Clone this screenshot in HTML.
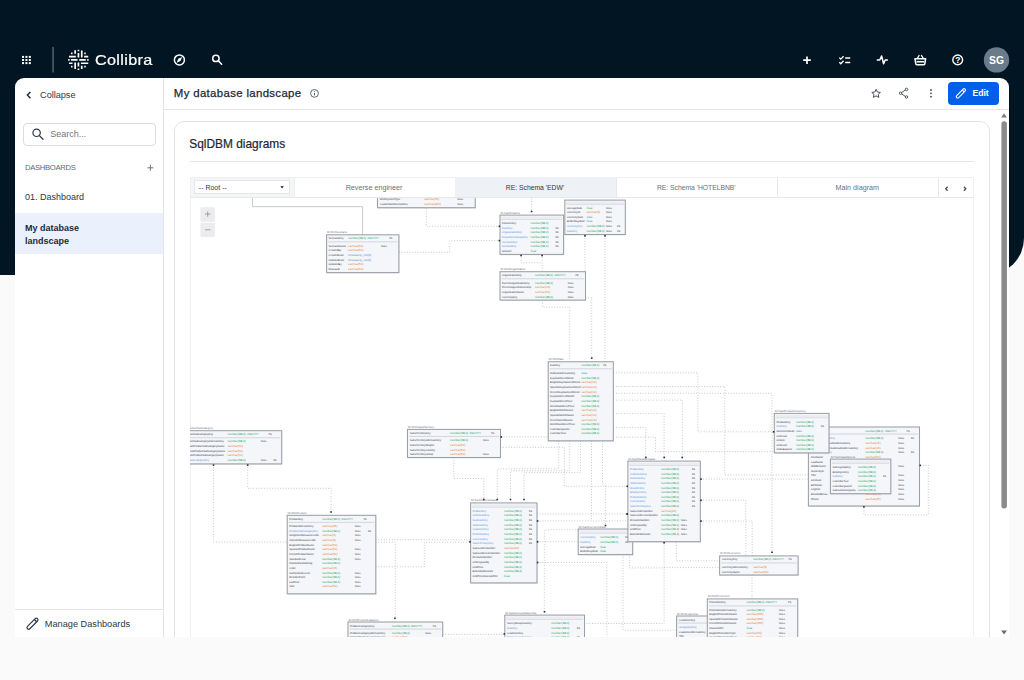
<!DOCTYPE html>
<html lang="en">
<head>
<meta charset="utf-8">
<title>My database landscape</title>
<style>
*{box-sizing:border-box;margin:0;padding:0}
html,body{width:1024px;height:680px;overflow:hidden;background:#fafafa;font-family:"Liberation Sans",sans-serif;color:#1f2a37}
.abs{position:absolute}
#dark{position:absolute;left:0;top:0;width:1024px;height:275px;background:#011622;border-bottom-right-radius:37px}
#panel{position:absolute;left:15px;top:77.5px;width:994px;height:559.5px;background:#fff;border-radius:9px 9px 0 0;overflow:hidden}
svg{display:block}
.t{position:absolute;white-space:nowrap;line-height:1}
.tab{top:183.5px;font-size:7.2px;text-align:center}
</style>
</head>
<body>
<div id="dark"></div>

<!-- top navigation -->
<svg class="abs" style="left:0;top:40px" width="1024" height="40" viewBox="0 40 1024 40">
  <!-- app grid -->
  <g fill="#fff">
    <rect x="22" y="55.9" width="2.05" height="2"/><rect x="25.4" y="55.9" width="2.05" height="2"/><rect x="28.8" y="55.9" width="2.05" height="2"/>
    <rect x="22" y="59.0" width="2.05" height="2"/><rect x="25.4" y="59.0" width="2.05" height="2"/><rect x="28.8" y="59.0" width="2.05" height="2"/>
    <rect x="22" y="62.1" width="2.05" height="2"/><rect x="25.4" y="62.1" width="2.05" height="2"/><rect x="28.8" y="62.1" width="2.05" height="2"/>
  </g>
  <rect x="52.4" y="47" width="1.3" height="25.5" fill="#5d6c7b"/>
  <!-- collibra mark -->
  <g transform="translate(78.35 59.95)" stroke="#fff" stroke-width="1.7" fill="none">
    <path d="M-9.4 -3.3H-2.5M5.8 -3.3H9.9M-7.3 0H-.8M.9 0H7.4M-9.4 3.3H-5.8M2.6 3.3H9.9"/>
    <path d="M-3.2 -9.8V-6.3M-3.2 2.5V9M.1 -7V-2.5M.1 2.5V6.5M3.4 -9.4V-2.5M3.4 5.8V9"/>
    <path d="M-10.2 0H-8.7M8.8 0H10.3M.1 -10.1V-8.6M.1 8.5V10M-7.3 -6.6H-5.8M5.9 -6.6H7.4M-7.3 6.6H-5.8M5.9 6.6H7.4"/>
  </g>
  <!-- compass -->
  <circle cx="179.4" cy="59.9" r="5" fill="none" stroke="#fff" stroke-width="1.5"/>
  <path d="M182.2 57.1L180.5 61L176.6 62.7L178.3 58.8Z" fill="#fff"/>
  <!-- search -->
  <circle cx="215.9" cy="58.4" r="3.2" fill="none" stroke="#fff" stroke-width="1.5"/>
  <path d="M218.3 60.8L221.6 64.2" stroke="#fff" stroke-width="1.6" stroke-linecap="round"/>
  <!-- plus -->
  <path d="M807 56.4V64M803.2 60.2H810.8" stroke="#fff" stroke-width="1.7"/>
  <!-- checklist -->
  <path d="M839.3 57.6L840.8 59.1L843.6 56.2M839.3 62.2L840.8 63.7L843.6 60.8" stroke="#fff" stroke-width="1.3" fill="none"/>
  <path d="M845.2 58H850.2M845.2 62.6H850.2" stroke="#fff" stroke-width="1.5"/>
  <!-- activity -->
  <path d="M877.3 60H879.8L881.6 56L883.6 63.8L885.2 60H887.4" stroke="#fff" stroke-width="1.5" fill="none" stroke-linejoin="round" stroke-linecap="round"/>
  <!-- basket -->
  <path d="M915 58.7H925.6L924.8 64Q924.7 64.7 924 64.7H916.6Q915.9 64.7 915.8 64Z" fill="none" stroke="#fff" stroke-width="1.55" stroke-linejoin="round"/>
  <path d="M917.2 58.5L919.1 55.5M923.4 58.5L921.5 55.5" stroke="#fff" stroke-width="1.4" stroke-linecap="round"/>
  <path d="M916.6 61.75H924" stroke="#fff" stroke-width="1.6"/>
  <!-- help -->
  <circle cx="957.7" cy="59.9" r="4.9" fill="none" stroke="#fff" stroke-width="1.4"/>
  <text x="957.7" y="62.9" font-family="Liberation Sans, sans-serif" font-size="8.4" font-weight="700" fill="#fff" text-anchor="middle">?</text>
  <!-- avatar -->
  <circle cx="996.5" cy="59.9" r="12.7" fill="#6a7b8b"/>
  <text x="996.5" y="63.6" font-family="Liberation Sans, sans-serif" font-size="10.3" font-weight="700" fill="#fff" text-anchor="middle">SG</text>
</svg>
<div class="t" style="left:95.2px;top:51.8px;font-size:15px;color:#fff;letter-spacing:.3px;-webkit-text-stroke:.2px #fff;transform:scaleX(1.08);transform-origin:0 0">Collibra</div>

<div id="panel">
  <!-- coordinates inside panel are page coords minus (15,77.5) -->
  <div class="abs" id="side" style="left:0;top:0;width:148.5px;height:559.5px;border-right:1px solid #e2e4e7"></div>
  <div class="abs" style="left:148.5px;top:31.5px;width:846px;height:1.2px;background:#e4e6e9"></div>
  <div class="abs" style="left:0;top:135.5px;width:148px;height:41px;background:#eaf1fc"></div>
  <div class="abs" style="left:0;top:531.5px;width:148px;height:1px;background:#e2e4e7"></div>
  <div class="abs" style="left:7.5px;top:45.5px;width:133px;height:22.5px;border:1px solid #d9dce0;border-radius:4px"></div>
  <!-- card -->
  <div class="abs" style="left:158.5px;top:43px;width:816.5px;height:560px;border:1px solid #e1e3e6;border-radius:10px"></div>
  <div class="abs" style="left:174.5px;top:83.5px;width:784px;height:1.2px;background:#e4e6e9"></div>
  <!-- edit button -->
  <div class="abs" style="left:932.5px;top:4.5px;width:51.5px;height:22.5px;background:#035eea;border-radius:4px"></div>
</div>

<!-- text & icons (page coordinates) -->
<div class="t" style="left:40.1px;top:91.3px;font-size:9.2px;color:#2c3745;letter-spacing:-.05px">Collapse</div>
<div class="t" style="left:50.2px;top:130.2px;font-size:9px;color:#6a7683">Search...</div>
<div class="t" style="left:25px;top:163.6px;font-size:7.7px;color:#5b6a7a;letter-spacing:-.33px">DASHBOARDS</div>
<div class="t" style="left:25px;top:192.6px;font-size:9px;color:#2c3745">01. Dashboard</div>
<div class="t" style="left:25px;top:221.7px;font-size:9px;font-weight:700;color:#1f2a37;line-height:13.2px">My database<br>landscape</div>
<div class="t" style="left:44.8px;top:620.4px;font-size:9.2px;color:#2c3745">Manage Dashboards</div>
<div class="t" style="left:173.8px;top:88.1px;font-size:11.4px;color:#1c2632;letter-spacing:.35px;-webkit-text-stroke:.25px #1c2632">My database landscape</div>
<div class="t" style="left:189.3px;top:139px;font-size:11.9px;color:#1c2632;-webkit-text-stroke:.2px #1c2632">SqlDBM diagrams</div>
<div class="t" style="left:972.6px;top:89.4px;font-size:8.7px;font-weight:700;color:#fff;letter-spacing:-.1px">Edit</div>

<svg class="abs" style="left:0;top:77px" width="1024" height="560" viewBox="0 77 1024 560">
  <!-- collapse chevron -->
  <path d="M30.4 92L27.4 95.1L30.4 98.2" stroke="#1f2a37" stroke-width="1.4" fill="none"/>
  <!-- sidebar search icon -->
  <circle cx="36.6" cy="132.8" r="3.7" fill="none" stroke="#2c3745" stroke-width="1.2"/>
  <path d="M39.4 135.6L43 139.2" stroke="#2c3745" stroke-width="1.3" stroke-linecap="round"/>
  <!-- add dashboard plus -->
  <path d="M150.4 164.8V170.8M147.4 167.8H153.4" stroke="#5b6a7a" stroke-width="0.9"/>
  <!-- manage pencil -->
  <g transform="translate(32.5 623.7) rotate(-45)" fill="none" stroke="#2c3745" stroke-width="1.15"><rect x="-7.1" y="-1.65" width="14.2" height="3.3" rx="1.65"/><path d="M4.3 -1.6V1.6" stroke-width="1.3"/></g>
  <!-- info icon -->
  <circle cx="314.5" cy="93.4" r="3.9" fill="none" stroke="#4a5663" stroke-width="0.9"/>
  <path d="M314.5 92.9V95.4M314.5 91.2V91.9" stroke="#4a5663" stroke-width="0.9"/>
  <!-- star -->
  <path d="M876.1 89.3L877.4 92L880.4 92.4L878.2 94.4L878.8 97.4L876.1 95.9L873.4 97.4L874 94.4L871.8 92.4L874.8 92Z" fill="none" stroke="#3b4755" stroke-width=".95" stroke-linejoin="round"/>
  <!-- share -->
  <path d="M905.6 89.9L901.6 92.6M901.6 93.9L905.6 96.6" stroke="#3b4755" stroke-width=".9" fill="none"/>
  <circle cx="906.5" cy="89.4" r="1.25" fill="none" stroke="#3b4755" stroke-width=".9"/><circle cx="900.6" cy="93.2" r="1.25" fill="none" stroke="#3b4755" stroke-width=".9"/><circle cx="906.5" cy="97" r="1.25" fill="none" stroke="#3b4755" stroke-width=".9"/>
  <!-- kebab -->
  <circle cx="931" cy="90" r=".9" fill="#3b4755"/><circle cx="931" cy="93.35" r=".9" fill="#3b4755"/><circle cx="931" cy="96.7" r=".9" fill="#3b4755"/>
  <!-- edit pencil -->
  <g transform="translate(960.9 93.35) rotate(-45)" fill="none" stroke="#fff" stroke-width="1.1"><rect x="-5.9" y="-1.4" width="11.8" height="2.8" rx="1.4"/><path d="M3.4 -1.3V1.3" stroke-width="1.1"/></g>
  <!-- scrollbar -->
  <path d="M1001.2 117.5H1006.9L1004.05 113.2Z" fill="#7d7d7d"/>
  <path d="M1001.2 630.4H1006.9L1004.05 634.4Z" fill="#6b6b6b"/>
  <rect x="1001.4" y="121.2" width="5.5" height="387.2" rx="2.7" fill="#8a8a8a"/>
</svg>


<!-- diagram frame -->
<div class="abs" style="left:189.5px;top:177px;width:784.5px;height:460px;border:1px solid #eff0f2;border-bottom:none"></div>
<div class="abs" style="left:190.5px;top:178px;width:103px;height:19px;background:#f3f5f7"></div>
<div class="abs" style="left:454.5px;top:178px;width:161.5px;height:19px;background:#eef1f5"></div>
<div class="abs" style="left:190.5px;top:196.7px;width:782.5px;height:1px;background:#e6e8eb"></div>
<div class="abs" style="left:193.5px;top:180.3px;width:96.5px;height:14px;background:#fff;border:1px solid #e3e6ea"></div>
<div class="abs" style="left:293.5px;top:178px;width:1px;height:19px;background:#eceef0"></div>
<div class="abs" style="left:615.8px;top:178px;width:1px;height:19px;background:#e6e8eb"></div>
<div class="abs" style="left:776.5px;top:178px;width:1px;height:19px;background:#e6e8eb"></div>
<div class="abs" style="left:937.5px;top:178px;width:1px;height:19px;background:#e6e8eb"></div>
<div class="t" style="left:198.8px;top:184.1px;font-size:7px;color:#33383e">-- Root --</div>
<div class="t tab" style="left:293.5px;width:161px;color:#6b7077">Reverse engineer</div>
<div class="t tab" style="left:454.5px;width:161px;color:#33383e;font-size:6.8px;top:184.6px">RE: Schema 'EDW'</div>
<div class="t tab" style="left:616px;width:160.5px;color:#6b7077;font-size:6.75px;top:184.6px">RE: Schema 'HOTELBNB'</div>
<div class="t tab" style="left:777px;width:160.5px;color:#6b7077">Main diagram</div>
<svg class="abs" style="left:190px;top:178px" width="784" height="62" viewBox="190 178 784 62">
  <path d="M280.4 186.3H283.8L282.1 188.4Z" fill="#222"/>
  <path d="M947.6 186.8L945.7 188.8L947.6 190.8" stroke="#4a4a4a" stroke-width="1.3" fill="none"/>
  <path d="M963.9 186.8L965.8 188.8L963.9 190.8" stroke="#4a4a4a" stroke-width="1.3" fill="none"/>
  <rect x="200.4" y="207.2" width="14.5" height="14.5" rx="1" fill="#ececef"/>
  <rect x="200.4" y="222.7" width="14.5" height="14.2" rx="1" fill="#ececef"/>
  <path d="M207.7 211.4V216.8M205 214.1H210.4M205 229.8H210.4" stroke="#8a8f96" stroke-width=".8"/>
</svg>
<svg class="abs" id="dgm" style="left:190px;top:197.5px" width="783.5" height="439.5" viewBox="190 197.5 783.5 439.5" font-family="Liberation Sans, sans-serif" text-rendering="geometricPrecision">
<defs><filter id="sh" x="-10%" y="-10%" width="120%" height="130%"><feGaussianBlur stdDeviation=".7"/></filter></defs>
<path d="M252.4 197V206.2H362.6V234.3" fill="none" stroke="#c6c8cc" stroke-width="1"/>
<g fill="none" stroke="#b3b7bb" stroke-width=".85" stroke-dasharray=".9 1.77">
<path d="M426.25 207.5V225.7H500"/>
<path d="M399 251.8H449.7V240.2H500"/>
<path d="M531.6 198V211"/>
<path d="M521.1 254V262.3H542.1"/>
<path d="M542.1 254V271"/>
<path d="M585 235V271"/>
<path d="M605 235V361"/>
<path d="M542.5 299.6V306.6H569.8V361"/>
<path d="M585.5 297.4H591.7V357.4"/>
<path d="M613.3 372.3H697.9V431.3H774"/>
<path d="M613.3 386H724.8V474.5H808"/>
<path d="M613.3 392.8H772V551.6"/>
<path d="M613.3 399.6H682.3V456.7"/>
<path d="M613.3 413.1H664.1V456.7"/>
<path d="M613.3 426.8H645.8V456.7"/>
<path d="M613.3 436.6H655.5V451.2H774"/>
<path d="M501 436.4H548.2"/>
<path d="M500.5 446.8H564.3V485.7H627.5"/>
<path d="M558.8 440.3V468.4H497.3V498.5"/>
<path d="M569.8 440.3V470.3H510.5V498.5"/>
<path d="M580.5 440.3V472.2H524V498.5"/>
<path d="M591.5 440.3V520.4"/>
<path d="M602.5 440.3V483.5H605.5V524.8"/>
<path d="M453.8 457V478H483.8V498.6"/>
<path d="M247.7 464V487.8H331.1V511.2"/>
<path d="M213.5 464V541.6H287"/>
<path d="M375.8 539.2H470.4"/>
<path d="M375.8 541.7H395.3V617.6"/>
<path d="M375.8 566.3H424.3V541.7H470.4"/>
<path d="M537 513.5H627.5"/>
<path d="M537 520.4H627.5"/>
<path d="M537 541.3H578"/>
<path d="M544.3 611V529.3H578"/>
<path d="M537 562H606.9V640"/>
<path d="M623.1 554V629.7H676.6"/>
<path d="M629.6 554V567.4H664"/>
<path d="M664.1 542V623H584.5"/>
<path d="M676.3 542V560.3H719.6"/>
<path d="M664.1 567.1H719.6"/>
<path d="M700.5 478.5H808"/>
<path d="M700.5 499.7H745.8V555"/>
<path d="M700.5 520.5H752.2V555"/>
<path d="M752 574.6V598"/>
<path d="M920 464.9H928.3V514.3H863.9V506"/>
<path d="M442.7 633.9H504.5"/>
</g>
<rect x="378.00" y="150.90" width="97.70" height="57.20" fill="#b4b9bf" opacity=".42" filter="url(#sh)"/>
<rect x="377.50" y="150.00" width="97.70" height="57.20" fill="#f4f6fa" stroke="#9b9fa6" stroke-width="1.05"/>
<text transform="scale(.1)" x="3798" y="1998" font-size="26.5" fill="#2f3338">MinPaymentType</text>
<text transform="scale(.1)" x="4239" y="1998" font-size="30.0" fill="#e8832f">varchar(50)</text>
<text transform="scale(.1)" x="4572" y="1998" font-size="24.0" fill="#34383d">NULL</text>
<text transform="scale(.1)" x="3798" y="2044" font-size="26.5" fill="#2f3338">CustomNumberOptions</text>
<text transform="scale(.1)" x="4239" y="2044" font-size="30.0" fill="#e8832f">varchar(200)</text>
<text transform="scale(.1)" x="4572" y="2044" font-size="24.0" fill="#34383d">NULL</text>
<rect x="327.10" y="235.20" width="72.30" height="37.80" fill="#b4b9bf" opacity=".42" filter="url(#sh)"/>
<rect x="326.60" y="234.30" width="72.30" height="37.80" fill="#f4f6fa" stroke="#9b9fa6" stroke-width="1.05"/>
<text transform="scale(.1)" x="3270" y="2328" font-size="28.5" fill="#70757b">tbl  DimScenario</text>
<text transform="scale(.1)" x="3286" y="2388" font-size="26.5" fill="#2f3338">ScenarioKey</text>
<text transform="scale(.1)" x="3481" y="2388" font-size="30.0" fill="#1fa65a">number(38,0)</text>
<text transform="scale(.1)" x="3673" y="2388" font-size="25.5" fill="#1fa65a">IDENTITY</text>
<text transform="scale(.1)" x="3892" y="2388" font-size="25.0" fill="#1d2024">PK</text>
<line x1="328.20" y1="241.35" x2="397.30" y2="241.35" stroke="#c3c8ce" stroke-width=".7"/>
<text transform="scale(.1)" x="3286" y="2462" font-size="26.5" fill="#2f3338">ScenarioName</text>
<text transform="scale(.1)" x="3481" y="2462" font-size="30.0" fill="#e8832f">varchar(50)</text>
<text transform="scale(.1)" x="3809" y="2462" font-size="24.0" fill="#34383d">NULL</text>
<text transform="scale(.1)" x="3286" y="2508" font-size="26.5" fill="#2f3338">CreatedBy</text>
<text transform="scale(.1)" x="3481" y="2508" font-size="30.0" fill="#e8832f">varchar(50)</text>
<text transform="scale(.1)" x="3286" y="2555" font-size="26.5" fill="#2f3338">CreatedDate</text>
<text transform="scale(.1)" x="3481" y="2555" font-size="30.0" fill="#4a8fe2">timestamp_ntz(9)</text>
<text transform="scale(.1)" x="3286" y="2601" font-size="26.5" fill="#2f3338">UpdatedDate</text>
<text transform="scale(.1)" x="3481" y="2601" font-size="30.0" fill="#4a8fe2">timestamp_ntz(9)</text>
<text transform="scale(.1)" x="3286" y="2648" font-size="26.5" fill="#2f3338">UpdatedBy</text>
<text transform="scale(.1)" x="3481" y="2648" font-size="30.0" fill="#e8832f">varchar(50)</text>
<text transform="scale(.1)" x="3286" y="2694" font-size="26.5" fill="#2f3338">RowGuid</text>
<text transform="scale(.1)" x="3481" y="2694" font-size="30.0" fill="#e8832f">varchar(50)</text>
<rect x="500.50" y="215.50" width="63.60" height="39.30" fill="#b4b9bf" opacity=".42" filter="url(#sh)"/>
<rect x="500.00" y="214.60" width="63.60" height="39.30" fill="#f4f6fa" stroke="#9b9fa6" stroke-width="1.05"/>
<text transform="scale(.1)" x="5004" y="2132" font-size="28.5" fill="#70757b">tbl  FactFinance</text>
<rect x="501.20" y="216.20" width="61.20" height="2.60" fill="#eaecf0"/>
<line x1="501.60" y1="219.00" x2="562.00" y2="219.00" stroke="#cfd3d8" stroke-width=".6"/>
<text transform="scale(.1)" x="5021" y="2236" font-size="26.5" fill="#2f3338">FinanceKey</text>
<text transform="scale(.1)" x="5305" y="2236" font-size="30.0" fill="#1fa65a">number(38,0)</text>
<text transform="scale(.1)" x="5021" y="2282" font-size="26.5" fill="#4a8fe2">DateKey</text>
<text transform="scale(.1)" x="5305" y="2282" font-size="30.0" fill="#1fa65a">number(38,0)</text>
<text transform="scale(.1)" x="5555" y="2282" font-size="25.0" fill="#1d2024">FK</text>
<text transform="scale(.1)" x="5021" y="2329" font-size="26.5" fill="#4a8fe2">OrganizationKey</text>
<text transform="scale(.1)" x="5305" y="2329" font-size="30.0" fill="#1fa65a">number(38,0)</text>
<text transform="scale(.1)" x="5555" y="2329" font-size="25.0" fill="#1d2024">FK</text>
<text transform="scale(.1)" x="5021" y="2375" font-size="26.5" fill="#4a8fe2">DepartmentGroupKey</text>
<text transform="scale(.1)" x="5305" y="2375" font-size="30.0" fill="#1fa65a">number(38,0)</text>
<text transform="scale(.1)" x="5555" y="2375" font-size="25.0" fill="#1d2024">FK</text>
<text transform="scale(.1)" x="5021" y="2422" font-size="26.5" fill="#4a8fe2">ScenarioKey</text>
<text transform="scale(.1)" x="5305" y="2422" font-size="30.0" fill="#1fa65a">number(38,0)</text>
<text transform="scale(.1)" x="5555" y="2422" font-size="25.0" fill="#1d2024">FK</text>
<text transform="scale(.1)" x="5021" y="2468" font-size="26.5" fill="#4a8fe2">AccountKey</text>
<text transform="scale(.1)" x="5305" y="2468" font-size="30.0" fill="#1fa65a">number(38,0)</text>
<text transform="scale(.1)" x="5555" y="2468" font-size="25.0" fill="#1d2024">FK</text>
<text transform="scale(.1)" x="5021" y="2514" font-size="26.5" fill="#2f3338">Amount</text>
<text transform="scale(.1)" x="5305" y="2514" font-size="30.0" fill="#1fa65a">float</text>
<rect x="565.30" y="200.50" width="60.50" height="34.40" fill="#b4b9bf" opacity=".42" filter="url(#sh)"/>
<rect x="564.80" y="199.60" width="60.50" height="34.40" fill="#f4f6fa" stroke="#9b9fa6" stroke-width="1.05"/>
<rect x="566.00" y="201.20" width="58.10" height="2.60" fill="#eaecf0"/>
<line x1="566.40" y1="204.00" x2="623.70" y2="204.00" stroke="#cfd3d8" stroke-width=".6"/>
<text transform="scale(.1)" x="5669" y="2080" font-size="26.5" fill="#2f3338">AverageRate</text>
<text transform="scale(.1)" x="5866" y="2080" font-size="30.0" fill="#1fa65a">float</text>
<text transform="scale(.1)" x="6060" y="2080" font-size="24.0" fill="#34383d">NULL</text>
<text transform="scale(.1)" x="5669" y="2126" font-size="26.5" fill="#2f3338">CurrencyID</text>
<text transform="scale(.1)" x="5866" y="2126" font-size="30.0" fill="#e8832f">varchar(3)</text>
<text transform="scale(.1)" x="6060" y="2126" font-size="24.0" fill="#34383d">NULL</text>
<text transform="scale(.1)" x="5669" y="2173" font-size="26.5" fill="#2f3338">CurrencyDate</text>
<text transform="scale(.1)" x="5866" y="2173" font-size="30.0" fill="#4a8fe2">date</text>
<text transform="scale(.1)" x="6060" y="2173" font-size="24.0" fill="#34383d">NULL</text>
<text transform="scale(.1)" x="5669" y="2219" font-size="26.5" fill="#2f3338">EndOfDayRate</text>
<text transform="scale(.1)" x="5866" y="2219" font-size="30.0" fill="#1fa65a">float</text>
<text transform="scale(.1)" x="6060" y="2219" font-size="24.0" fill="#34383d">NULL</text>
<text transform="scale(.1)" x="5669" y="2266" font-size="26.5" fill="#4a8fe2">CurrencyKey</text>
<text transform="scale(.1)" x="5866" y="2266" font-size="30.0" fill="#1fa65a">number(38,0)</text>
<text transform="scale(.1)" x="6060" y="2266" font-size="24.0" fill="#34383d">NULL</text>
<text transform="scale(.1)" x="6173" y="2266" font-size="25.0" fill="#1d2024">FK</text>
<text transform="scale(.1)" x="5669" y="2312" font-size="26.5" fill="#4a8fe2">DateKey</text>
<text transform="scale(.1)" x="5866" y="2312" font-size="30.0" fill="#1fa65a">number(38,0)</text>
<text transform="scale(.1)" x="6060" y="2312" font-size="24.0" fill="#34383d">NULL</text>
<text transform="scale(.1)" x="6173" y="2312" font-size="25.0" fill="#1d2024">FK</text>
<rect x="500.50" y="272.10" width="85.50" height="28.40" fill="#b4b9bf" opacity=".42" filter="url(#sh)"/>
<rect x="500.00" y="271.20" width="85.50" height="28.40" fill="#f4f6fa" stroke="#9b9fa6" stroke-width="1.05"/>
<text transform="scale(.1)" x="5004" y="2697" font-size="28.5" fill="#70757b">tbl  DimOrganization</text>
<text transform="scale(.1)" x="5021" y="2757" font-size="26.5" fill="#2f3338">OrganizationKey</text>
<text transform="scale(.1)" x="5350" y="2757" font-size="30.0" fill="#1fa65a">number(38,0)</text>
<text transform="scale(.1)" x="5542" y="2757" font-size="25.5" fill="#1fa65a">IDENTITY</text>
<text transform="scale(.1)" x="5754" y="2757" font-size="25.0" fill="#1d2024">PK</text>
<line x1="501.60" y1="278.25" x2="583.90" y2="278.25" stroke="#c3c8ce" stroke-width=".7"/>
<text transform="scale(.1)" x="5021" y="2832" font-size="26.5" fill="#2f3338">ParentOrganizationKey</text>
<text transform="scale(.1)" x="5350" y="2832" font-size="30.0" fill="#1fa65a">number(38,0)</text>
<text transform="scale(.1)" x="5677" y="2832" font-size="24.0" fill="#34383d">NULL</text>
<text transform="scale(.1)" x="5021" y="2878" font-size="26.5" fill="#2f3338">PercentageOfOwnership</text>
<text transform="scale(.1)" x="5350" y="2878" font-size="30.0" fill="#e8832f">varchar(16)</text>
<text transform="scale(.1)" x="5677" y="2878" font-size="24.0" fill="#34383d">NULL</text>
<text transform="scale(.1)" x="5021" y="2925" font-size="26.5" fill="#2f3338">OrganizationName</text>
<text transform="scale(.1)" x="5350" y="2925" font-size="30.0" fill="#e8832f">varchar(50)</text>
<text transform="scale(.1)" x="5677" y="2925" font-size="24.0" fill="#34383d">NULL</text>
<text transform="scale(.1)" x="5021" y="2971" font-size="26.5" fill="#2f3338">CurrencyKey</text>
<text transform="scale(.1)" x="5350" y="2971" font-size="30.0" fill="#1fa65a">number(38,0)</text>
<text transform="scale(.1)" x="5677" y="2971" font-size="24.0" fill="#34383d">NULL</text>
<rect x="184.50" y="431.10" width="97.70" height="33.20" fill="#b4b9bf" opacity=".42" filter="url(#sh)"/>
<rect x="184.00" y="430.20" width="97.70" height="33.20" fill="#f4f6fa" stroke="#9b9fa6" stroke-width="1.05"/>
<text transform="scale(.1)" x="1785" y="4287" font-size="28.5" fill="#70757b">tbl  DimProductSubcategory</text>
<text transform="scale(.1)" x="1846" y="4347" font-size="26.5" fill="#2f3338">ProductSubcategoryKey</text>
<text transform="scale(.1)" x="2276" y="4347" font-size="30.0" fill="#1fa65a">number(38,0)</text>
<text transform="scale(.1)" x="2471" y="4347" font-size="25.5" fill="#1fa65a">IDENTITY</text>
<text transform="scale(.1)" x="2686" y="4347" font-size="25.0" fill="#1d2024">PK</text>
<line x1="185.60" y1="437.25" x2="280.10" y2="437.25" stroke="#c3c8ce" stroke-width=".7"/>
<text transform="scale(.1)" x="1846" y="4418" font-size="26.5" fill="#2f3338">ProductSubcategoryAlternateKey</text>
<text transform="scale(.1)" x="2276" y="4418" font-size="30.0" fill="#1fa65a">number(38,0)</text>
<text transform="scale(.1)" x="2608" y="4418" font-size="24.0" fill="#34383d">NULL</text>
<text transform="scale(.1)" x="1846" y="4464" font-size="26.5" fill="#2f3338">EnglishProductSubcategoryName</text>
<text transform="scale(.1)" x="2276" y="4464" font-size="30.0" fill="#e8832f">varchar(50)</text>
<text transform="scale(.1)" x="1846" y="4511" font-size="26.5" fill="#2f3338">SpanishProductSubcategoryName</text>
<text transform="scale(.1)" x="2276" y="4511" font-size="30.0" fill="#e8832f">varchar(50)</text>
<text transform="scale(.1)" x="1846" y="4557" font-size="26.5" fill="#2f3338">FrenchProductSubcategoryName</text>
<text transform="scale(.1)" x="2276" y="4557" font-size="30.0" fill="#e8832f">varchar(50)</text>
<text transform="scale(.1)" x="1846" y="4604" font-size="26.5" fill="#4a8fe2">ProductCategoryKey</text>
<text transform="scale(.1)" x="2276" y="4604" font-size="30.0" fill="#1fa65a">number(38,0)</text>
<text transform="scale(.1)" x="2608" y="4604" font-size="24.0" fill="#34383d">NULL</text>
<text transform="scale(.1)" x="2735" y="4604" font-size="25.0" fill="#1d2024">FK</text>
<rect x="408.00" y="429.80" width="93.00" height="28.10" fill="#b4b9bf" opacity=".42" filter="url(#sh)"/>
<rect x="407.50" y="428.90" width="93.00" height="28.10" fill="#f4f6fa" stroke="#9b9fa6" stroke-width="1.05"/>
<text transform="scale(.1)" x="4079" y="4274" font-size="28.5" fill="#70757b">tbl  DimSalesTerritory</text>
<text transform="scale(.1)" x="4097" y="4334" font-size="26.5" fill="#2f3338">SalesTerritoryKey</text>
<text transform="scale(.1)" x="4501" y="4334" font-size="30.0" fill="#1fa65a">number(38,0)</text>
<text transform="scale(.1)" x="4693" y="4334" font-size="25.5" fill="#1fa65a">IDENTITY</text>
<text transform="scale(.1)" x="4912" y="4334" font-size="25.0" fill="#1d2024">PK</text>
<line x1="409.10" y1="435.95" x2="498.90" y2="435.95" stroke="#c3c8ce" stroke-width=".7"/>
<text transform="scale(.1)" x="4097" y="4408" font-size="26.5" fill="#2f3338">SalesTerritoryAlternateKey</text>
<text transform="scale(.1)" x="4501" y="4408" font-size="30.0" fill="#1fa65a">number(38,0)</text>
<text transform="scale(.1)" x="4830" y="4408" font-size="24.0" fill="#34383d">NULL</text>
<text transform="scale(.1)" x="4097" y="4454" font-size="26.5" fill="#2f3338">SalesTerritoryRegion</text>
<text transform="scale(.1)" x="4501" y="4454" font-size="30.0" fill="#e8832f">varchar(50)</text>
<text transform="scale(.1)" x="4097" y="4501" font-size="26.5" fill="#2f3338">SalesTerritoryCountry</text>
<text transform="scale(.1)" x="4501" y="4501" font-size="30.0" fill="#e8832f">varchar(50)</text>
<text transform="scale(.1)" x="4097" y="4547" font-size="26.5" fill="#2f3338">SalesTerritoryGroup</text>
<text transform="scale(.1)" x="4501" y="4547" font-size="30.0" fill="#e8832f">varchar(50)</text>
<text transform="scale(.1)" x="4830" y="4547" font-size="24.0" fill="#34383d">NULL</text>
<rect x="548.70" y="362.15" width="65.10" height="79.05" fill="#b4b9bf" opacity=".42" filter="url(#sh)"/>
<rect x="548.20" y="361.25" width="65.10" height="79.05" fill="#f4f6fa" stroke="#9b9fa6" stroke-width="1.05"/>
<text transform="scale(.1)" x="5486" y="3598" font-size="28.5" fill="#70757b">tbl  DimDate</text>
<text transform="scale(.1)" x="5500" y="3658" font-size="26.5" fill="#2f3338">DateKey</text>
<text transform="scale(.1)" x="5813" y="3658" font-size="30.0" fill="#1fa65a">number(38,0)</text>
<text transform="scale(.1)" x="6032" y="3658" font-size="25.0" fill="#1d2024">PK</text>
<line x1="549.80" y1="368.30" x2="611.70" y2="368.30" stroke="#c3c8ce" stroke-width=".7"/>
<text transform="scale(.1)" x="5500" y="3736" font-size="26.5" fill="#2f3338">FullDateAlternateKey</text>
<text transform="scale(.1)" x="5813" y="3736" font-size="30.0" fill="#4a8fe2">date</text>
<text transform="scale(.1)" x="5500" y="3782" font-size="26.5" fill="#2f3338">DayNumberOfWeek</text>
<text transform="scale(.1)" x="5813" y="3782" font-size="30.0" fill="#1fa65a">number(38,0)</text>
<text transform="scale(.1)" x="5500" y="3829" font-size="26.5" fill="#2f3338">EnglishDayNameOfWeek</text>
<text transform="scale(.1)" x="5813" y="3829" font-size="30.0" fill="#e8832f">varchar(10)</text>
<text transform="scale(.1)" x="5500" y="3875" font-size="26.5" fill="#2f3338">SpanishDayNameOfWeek</text>
<text transform="scale(.1)" x="5813" y="3875" font-size="30.0" fill="#e8832f">varchar(10)</text>
<text transform="scale(.1)" x="5500" y="3922" font-size="26.5" fill="#2f3338">FrenchDayNameOfWeek</text>
<text transform="scale(.1)" x="5813" y="3922" font-size="30.0" fill="#e8832f">varchar(10)</text>
<text transform="scale(.1)" x="5500" y="3968" font-size="26.5" fill="#2f3338">DayNumberOfMonth</text>
<text transform="scale(.1)" x="5813" y="3968" font-size="30.0" fill="#1fa65a">number(38,0)</text>
<text transform="scale(.1)" x="5500" y="4014" font-size="26.5" fill="#2f3338">DayNumberOfYear</text>
<text transform="scale(.1)" x="5813" y="4014" font-size="30.0" fill="#1fa65a">number(38,0)</text>
<text transform="scale(.1)" x="5500" y="4061" font-size="26.5" fill="#2f3338">WeekNumberOfYear</text>
<text transform="scale(.1)" x="5813" y="4061" font-size="30.0" fill="#1fa65a">number(38,0)</text>
<text transform="scale(.1)" x="5500" y="4107" font-size="26.5" fill="#2f3338">EnglishMonthName</text>
<text transform="scale(.1)" x="5813" y="4107" font-size="30.0" fill="#e8832f">varchar(10)</text>
<text transform="scale(.1)" x="5500" y="4154" font-size="26.5" fill="#2f3338">SpanishMonthName</text>
<text transform="scale(.1)" x="5813" y="4154" font-size="30.0" fill="#e8832f">varchar(10)</text>
<text transform="scale(.1)" x="5500" y="4200" font-size="26.5" fill="#2f3338">FrenchMonthName</text>
<text transform="scale(.1)" x="5813" y="4200" font-size="30.0" fill="#e8832f">varchar(10)</text>
<text transform="scale(.1)" x="5500" y="4246" font-size="26.5" fill="#2f3338">MonthNumberOfYear</text>
<text transform="scale(.1)" x="5813" y="4246" font-size="30.0" fill="#1fa65a">number(38,0)</text>
<text transform="scale(.1)" x="5500" y="4293" font-size="26.5" fill="#2f3338">CalendarQuarter</text>
<text transform="scale(.1)" x="5813" y="4293" font-size="30.0" fill="#1fa65a">number(38,0)</text>
<text transform="scale(.1)" x="5500" y="4339" font-size="26.5" fill="#2f3338">CalendarYear</text>
<text transform="scale(.1)" x="5813" y="4339" font-size="30.0" fill="#1fa65a">number(38,0)</text>
<text transform="scale(.1)" x="5500" y="4382" font-size="26.5" fill="#9a9fa6">...</text>
<rect x="808.90" y="427.40" width="111.10" height="79.00" fill="#b4b9bf" opacity=".42" filter="url(#sh)"/>
<rect x="808.40" y="426.50" width="111.10" height="79.00" fill="#f4f6fa" stroke="#9b9fa6" stroke-width="1.05"/>
<text transform="scale(.1)" x="8110" y="4310" font-size="26.5" fill="#2f3338">EmployeeKey</text>
<text transform="scale(.1)" x="8653" y="4310" font-size="30.0" fill="#1fa65a">number(38,0)</text>
<text transform="scale(.1)" x="8850" y="4310" font-size="25.5" fill="#1fa65a">IDENTITY</text>
<text transform="scale(.1)" x="9066" y="4310" font-size="25.0" fill="#1d2024">PK</text>
<line x1="810.00" y1="433.55" x2="917.90" y2="433.55" stroke="#c3c8ce" stroke-width=".7"/>
<text transform="scale(.1)" x="8110" y="4388" font-size="26.5" fill="#4a8fe2">ParentEmployeeKey</text>
<text transform="scale(.1)" x="8653" y="4388" font-size="30.0" fill="#1fa65a">number(38,0)</text>
<text transform="scale(.1)" x="8983" y="4388" font-size="24.0" fill="#34383d">NULL</text>
<text transform="scale(.1)" x="9110" y="4388" font-size="25.0" fill="#1d2024">FK</text>
<text transform="scale(.1)" x="8110" y="4434" font-size="26.5" fill="#2f3338">EmployeeNationalIDAlternateKey</text>
<text transform="scale(.1)" x="8653" y="4434" font-size="30.0" fill="#e8832f">varchar(15)</text>
<text transform="scale(.1)" x="8983" y="4434" font-size="24.0" fill="#34383d">NULL</text>
<text transform="scale(.1)" x="8110" y="4481" font-size="26.5" fill="#2f3338">ParentEmployeeNationalIDAlternateKey</text>
<text transform="scale(.1)" x="8653" y="4481" font-size="30.0" fill="#e8832f">varchar(15)</text>
<text transform="scale(.1)" x="8983" y="4481" font-size="24.0" fill="#34383d">NULL</text>
<text transform="scale(.1)" x="8110" y="4527" font-size="26.5" fill="#4a8fe2">SalesTerritoryKey</text>
<text transform="scale(.1)" x="8653" y="4527" font-size="30.0" fill="#1fa65a">number(38,0)</text>
<text transform="scale(.1)" x="8983" y="4527" font-size="24.0" fill="#34383d">NULL</text>
<text transform="scale(.1)" x="9110" y="4527" font-size="25.0" fill="#1d2024">FK</text>
<text transform="scale(.1)" x="8110" y="4574" font-size="26.5" fill="#2f3338">FirstName</text>
<text transform="scale(.1)" x="8653" y="4574" font-size="30.0" fill="#e8832f">varchar(50)</text>
<text transform="scale(.1)" x="8110" y="4620" font-size="26.5" fill="#2f3338">LastName</text>
<text transform="scale(.1)" x="8653" y="4620" font-size="30.0" fill="#e8832f">varchar(50)</text>
<text transform="scale(.1)" x="8110" y="4666" font-size="26.5" fill="#2f3338">MiddleName</text>
<text transform="scale(.1)" x="8653" y="4666" font-size="30.0" fill="#e8832f">varchar(50)</text>
<text transform="scale(.1)" x="8983" y="4666" font-size="24.0" fill="#34383d">NULL</text>
<text transform="scale(.1)" x="8110" y="4713" font-size="26.5" fill="#2f3338">NameStyle</text>
<text transform="scale(.1)" x="8653" y="4713" font-size="30.0" fill="#1fa65a">number(38,0)</text>
<text transform="scale(.1)" x="8110" y="4759" font-size="26.5" fill="#2f3338">Title</text>
<text transform="scale(.1)" x="8653" y="4759" font-size="30.0" fill="#e8832f">varchar(50)</text>
<text transform="scale(.1)" x="8983" y="4759" font-size="24.0" fill="#34383d">NULL</text>
<text transform="scale(.1)" x="8110" y="4806" font-size="26.5" fill="#2f3338">HireDate</text>
<text transform="scale(.1)" x="8653" y="4806" font-size="30.0" fill="#4a8fe2">date</text>
<text transform="scale(.1)" x="8983" y="4806" font-size="24.0" fill="#34383d">NULL</text>
<text transform="scale(.1)" x="8110" y="4852" font-size="26.5" fill="#2f3338">BirthDate</text>
<text transform="scale(.1)" x="8653" y="4852" font-size="30.0" fill="#4a8fe2">date</text>
<text transform="scale(.1)" x="8983" y="4852" font-size="24.0" fill="#34383d">NULL</text>
<text transform="scale(.1)" x="8110" y="4898" font-size="26.5" fill="#2f3338">LoginID</text>
<text transform="scale(.1)" x="8653" y="4898" font-size="30.0" fill="#e8832f">varchar(256)</text>
<text transform="scale(.1)" x="8983" y="4898" font-size="24.0" fill="#34383d">NULL</text>
<text transform="scale(.1)" x="8110" y="4945" font-size="26.5" fill="#2f3338">EmailAddress</text>
<text transform="scale(.1)" x="8653" y="4945" font-size="30.0" fill="#e8832f">varchar(50)</text>
<text transform="scale(.1)" x="8983" y="4945" font-size="24.0" fill="#34383d">NULL</text>
<text transform="scale(.1)" x="8110" y="4991" font-size="26.5" fill="#2f3338">Phone</text>
<text transform="scale(.1)" x="8653" y="4991" font-size="30.0" fill="#e8832f">varchar(25)</text>
<text transform="scale(.1)" x="8983" y="4991" font-size="24.0" fill="#34383d">NULL</text>
<text transform="scale(.1)" x="8110" y="5034" font-size="26.5" fill="#9a9fa6">...</text>
<rect x="774.80" y="413.80" width="54.70" height="39.50" fill="#b4b9bf" opacity=".42" filter="url(#sh)"/>
<rect x="774.30" y="412.90" width="54.70" height="39.50" fill="#f4f6fa" stroke="#9b9fa6" stroke-width="1.05"/>
<text transform="scale(.1)" x="7747" y="4114" font-size="28.5" fill="#70757b">tbl  FactProductInventory</text>
<rect x="775.50" y="414.50" width="52.30" height="2.60" fill="#eaecf0"/>
<line x1="775.90" y1="417.30" x2="827.40" y2="417.30" stroke="#cfd3d8" stroke-width=".6"/>
<text transform="scale(.1)" x="7766" y="4221" font-size="26.5" fill="#2f3338">ProductKey</text>
<text transform="scale(.1)" x="7960" y="4221" font-size="30.0" fill="#1fa65a">number(38,0)</text>
<text transform="scale(.1)" x="7766" y="4267" font-size="26.5" fill="#4a8fe2">DateKey</text>
<text transform="scale(.1)" x="7960" y="4267" font-size="30.0" fill="#1fa65a">number(38,0)</text>
<text transform="scale(.1)" x="8210" y="4267" font-size="25.0" fill="#1d2024">FK</text>
<text transform="scale(.1)" x="7766" y="4314" font-size="26.5" fill="#2f3338">MovementDate</text>
<text transform="scale(.1)" x="7960" y="4314" font-size="30.0" fill="#4a8fe2">date</text>
<text transform="scale(.1)" x="7766" y="4360" font-size="26.5" fill="#2f3338">UnitCost</text>
<text transform="scale(.1)" x="7960" y="4360" font-size="30.0" fill="#1fa65a">number(38,4)</text>
<text transform="scale(.1)" x="7766" y="4407" font-size="26.5" fill="#2f3338">UnitsIn</text>
<text transform="scale(.1)" x="7960" y="4407" font-size="30.0" fill="#1fa65a">number(38,0)</text>
<text transform="scale(.1)" x="7766" y="4453" font-size="26.5" fill="#2f3338">UnitsOut</text>
<text transform="scale(.1)" x="7960" y="4453" font-size="30.0" fill="#1fa65a">number(38,0)</text>
<text transform="scale(.1)" x="7766" y="4499" font-size="26.5" fill="#2f3338">UnitsBalance</text>
<text transform="scale(.1)" x="7960" y="4499" font-size="30.0" fill="#1fa65a">number(38,0)</text>
<rect x="830.90" y="459.50" width="60.40" height="34.60" fill="#b4b9bf" opacity=".42" filter="url(#sh)"/>
<rect x="830.40" y="458.60" width="60.40" height="34.60" fill="#f4f6fa" stroke="#9b9fa6" stroke-width="1.05"/>
<text transform="scale(.1)" x="8308" y="4572" font-size="28.5" fill="#70757b">tbl  FactSalesQuota</text>
<rect x="831.60" y="460.20" width="58.00" height="2.60" fill="#eaecf0"/>
<line x1="832.00" y1="463.00" x2="889.20" y2="463.00" stroke="#cfd3d8" stroke-width=".6"/>
<text transform="scale(.1)" x="8325" y="4676" font-size="26.5" fill="#2f3338">SalesQuotaKey</text>
<text transform="scale(.1)" x="8578" y="4676" font-size="30.0" fill="#1fa65a">number(38,0)</text>
<text transform="scale(.1)" x="8325" y="4722" font-size="26.5" fill="#2f3338">EmployeeKey</text>
<text transform="scale(.1)" x="8578" y="4722" font-size="30.0" fill="#1fa65a">number(38,0)</text>
<text transform="scale(.1)" x="8325" y="4769" font-size="26.5" fill="#4a8fe2">DateKey</text>
<text transform="scale(.1)" x="8578" y="4769" font-size="30.0" fill="#1fa65a">number(38,0)</text>
<text transform="scale(.1)" x="8830" y="4769" font-size="25.0" fill="#1d2024">FK</text>
<text transform="scale(.1)" x="8325" y="4815" font-size="26.5" fill="#2f3338">CalendarYear</text>
<text transform="scale(.1)" x="8578" y="4815" font-size="30.0" fill="#1fa65a">number(38,0)</text>
<text transform="scale(.1)" x="8325" y="4862" font-size="26.5" fill="#2f3338">CalendarQuarter</text>
<text transform="scale(.1)" x="8578" y="4862" font-size="30.0" fill="#1fa65a">number(38,0)</text>
<text transform="scale(.1)" x="8325" y="4908" font-size="26.5" fill="#2f3338">SalesAmountQuota</text>
<text transform="scale(.1)" x="8578" y="4908" font-size="30.0" fill="#1fa65a">number(38,4)</text>
<rect x="578.70" y="529.40" width="54.50" height="25.60" fill="#b4b9bf" opacity=".42" filter="url(#sh)"/>
<rect x="578.20" y="528.50" width="54.50" height="25.60" fill="#f4f6fa" stroke="#9b9fa6" stroke-width="1.05"/>
<text transform="scale(.1)" x="5786" y="5270" font-size="28.5" fill="#70757b">tbl  FactCurrencyRate</text>
<rect x="579.40" y="530.10" width="52.10" height="2.60" fill="#eaecf0"/>
<line x1="579.80" y1="532.90" x2="631.10" y2="532.90" stroke="#cfd3d8" stroke-width=".6"/>
<text transform="scale(.1)" x="5803" y="5379" font-size="26.5" fill="#4a8fe2">CurrencyKey</text>
<text transform="scale(.1)" x="6002" y="5379" font-size="30.0" fill="#1fa65a">number(38,0)</text>
<text transform="scale(.1)" x="6253" y="5379" font-size="25.0" fill="#1d2024">FK</text>
<text transform="scale(.1)" x="5803" y="5425" font-size="26.5" fill="#4a8fe2">DateKey</text>
<text transform="scale(.1)" x="6002" y="5425" font-size="30.0" fill="#1fa65a">number(38,0)</text>
<text transform="scale(.1)" x="6253" y="5425" font-size="25.0" fill="#1d2024">FK</text>
<text transform="scale(.1)" x="5803" y="5472" font-size="26.5" fill="#2f3338">AverageRate</text>
<text transform="scale(.1)" x="6002" y="5472" font-size="30.0" fill="#1fa65a">float</text>
<text transform="scale(.1)" x="5803" y="5518" font-size="26.5" fill="#2f3338">EndOfDayRate</text>
<text transform="scale(.1)" x="6002" y="5518" font-size="30.0" fill="#1fa65a">float</text>
<rect x="628.40" y="461.50" width="72.40" height="80.60" fill="#b4b9bf" opacity=".42" filter="url(#sh)"/>
<rect x="627.90" y="460.60" width="72.40" height="80.60" fill="#f4f6fa" stroke="#9b9fa6" stroke-width="1.05"/>
<text transform="scale(.1)" x="6283" y="4592" font-size="28.5" fill="#70757b">tbl  FactResellerSales</text>
<rect x="629.10" y="462.20" width="70.00" height="2.60" fill="#eaecf0"/>
<line x1="629.50" y1="465.00" x2="698.70" y2="465.00" stroke="#cfd3d8" stroke-width=".6"/>
<text transform="scale(.1)" x="6300" y="4694" font-size="26.5" fill="#4a8fe2">ProductKey</text>
<text transform="scale(.1)" x="6611" y="4694" font-size="30.0" fill="#1fa65a">number(38,0)</text>
<text transform="scale(.1)" x="6920" y="4694" font-size="25.0" fill="#1d2024">FK</text>
<text transform="scale(.1)" x="6300" y="4740" font-size="26.5" fill="#4a8fe2">OrderDateKey</text>
<text transform="scale(.1)" x="6611" y="4740" font-size="30.0" fill="#1fa65a">number(38,0)</text>
<text transform="scale(.1)" x="6920" y="4740" font-size="25.0" fill="#1d2024">FK</text>
<text transform="scale(.1)" x="6300" y="4787" font-size="26.5" fill="#4a8fe2">DueDateKey</text>
<text transform="scale(.1)" x="6611" y="4787" font-size="30.0" fill="#1fa65a">number(38,0)</text>
<text transform="scale(.1)" x="6920" y="4787" font-size="25.0" fill="#1d2024">FK</text>
<text transform="scale(.1)" x="6300" y="4833" font-size="26.5" fill="#4a8fe2">ShipDateKey</text>
<text transform="scale(.1)" x="6611" y="4833" font-size="30.0" fill="#1fa65a">number(38,0)</text>
<text transform="scale(.1)" x="6920" y="4833" font-size="25.0" fill="#1d2024">FK</text>
<text transform="scale(.1)" x="6300" y="4880" font-size="26.5" fill="#4a8fe2">ResellerKey</text>
<text transform="scale(.1)" x="6611" y="4880" font-size="30.0" fill="#1fa65a">number(38,0)</text>
<text transform="scale(.1)" x="6920" y="4880" font-size="25.0" fill="#1d2024">FK</text>
<text transform="scale(.1)" x="6300" y="4926" font-size="26.5" fill="#4a8fe2">EmployeeKey</text>
<text transform="scale(.1)" x="6611" y="4926" font-size="30.0" fill="#1fa65a">number(38,0)</text>
<text transform="scale(.1)" x="6920" y="4926" font-size="25.0" fill="#1d2024">FK</text>
<text transform="scale(.1)" x="6300" y="4972" font-size="26.5" fill="#4a8fe2">PromotionKey</text>
<text transform="scale(.1)" x="6611" y="4972" font-size="30.0" fill="#1fa65a">number(38,0)</text>
<text transform="scale(.1)" x="6920" y="4972" font-size="25.0" fill="#1d2024">FK</text>
<text transform="scale(.1)" x="6300" y="5019" font-size="26.5" fill="#4a8fe2">CurrencyKey</text>
<text transform="scale(.1)" x="6611" y="5019" font-size="30.0" fill="#1fa65a">number(38,0)</text>
<text transform="scale(.1)" x="6920" y="5019" font-size="25.0" fill="#1d2024">FK</text>
<text transform="scale(.1)" x="6300" y="5065" font-size="26.5" fill="#4a8fe2">SalesTerritoryKey</text>
<text transform="scale(.1)" x="6611" y="5065" font-size="30.0" fill="#1fa65a">number(38,0)</text>
<text transform="scale(.1)" x="6920" y="5065" font-size="25.0" fill="#1d2024">FK</text>
<text transform="scale(.1)" x="6300" y="5112" font-size="26.5" fill="#2f3338">SalesOrderNumber</text>
<text transform="scale(.1)" x="6611" y="5112" font-size="30.0" fill="#e8832f">varchar(20)</text>
<text transform="scale(.1)" x="6300" y="5158" font-size="26.5" fill="#2f3338">SalesOrderLineNumber</text>
<text transform="scale(.1)" x="6611" y="5158" font-size="30.0" fill="#1fa65a">number(38,0)</text>
<text transform="scale(.1)" x="6300" y="5204" font-size="26.5" fill="#2f3338">RevisionNumber</text>
<text transform="scale(.1)" x="6611" y="5204" font-size="30.0" fill="#1fa65a">number(38,0)</text>
<text transform="scale(.1)" x="6809" y="5204" font-size="24.0" fill="#34383d">NULL</text>
<text transform="scale(.1)" x="6300" y="5251" font-size="26.5" fill="#2f3338">OrderQuantity</text>
<text transform="scale(.1)" x="6611" y="5251" font-size="30.0" fill="#1fa65a">number(38,0)</text>
<text transform="scale(.1)" x="6809" y="5251" font-size="24.0" fill="#34383d">NULL</text>
<text transform="scale(.1)" x="6300" y="5297" font-size="26.5" fill="#2f3338">UnitPrice</text>
<text transform="scale(.1)" x="6611" y="5297" font-size="30.0" fill="#1fa65a">number(38,4)</text>
<text transform="scale(.1)" x="6809" y="5297" font-size="24.0" fill="#34383d">NULL</text>
<text transform="scale(.1)" x="6300" y="5344" font-size="26.5" fill="#2f3338">ExtendedAmount</text>
<text transform="scale(.1)" x="6611" y="5344" font-size="30.0" fill="#1fa65a">number(38,4)</text>
<text transform="scale(.1)" x="6809" y="5344" font-size="24.0" fill="#34383d">NULL</text>
<text transform="scale(.1)" x="6300" y="5386" font-size="26.5" fill="#9a9fa6">...</text>
<rect x="287.70" y="515.70" width="88.60" height="78.50" fill="#b4b9bf" opacity=".42" filter="url(#sh)"/>
<rect x="287.20" y="514.80" width="88.60" height="78.50" fill="#f4f6fa" stroke="#9b9fa6" stroke-width="1.05"/>
<text transform="scale(.1)" x="2876" y="5133" font-size="28.5" fill="#70757b">tbl  DimProduct</text>
<text transform="scale(.1)" x="2893" y="5193" font-size="26.5" fill="#2f3338">ProductKey</text>
<text transform="scale(.1)" x="3222" y="5193" font-size="30.0" fill="#1fa65a">number(38,0)</text>
<text transform="scale(.1)" x="3414" y="5193" font-size="25.5" fill="#1fa65a">IDENTITY</text>
<text transform="scale(.1)" x="3634" y="5193" font-size="25.0" fill="#1d2024">PK</text>
<line x1="288.80" y1="521.85" x2="374.20" y2="521.85" stroke="#c3c8ce" stroke-width=".7"/>
<text transform="scale(.1)" x="2893" y="5266" font-size="26.5" fill="#2f3338">ProductAlternateKey</text>
<text transform="scale(.1)" x="3222" y="5266" font-size="30.0" fill="#e8832f">varchar(25)</text>
<text transform="scale(.1)" x="3548" y="5266" font-size="24.0" fill="#34383d">NULL</text>
<text transform="scale(.1)" x="2893" y="5312" font-size="26.5" fill="#4a8fe2">ProductSubcategoryKey</text>
<text transform="scale(.1)" x="3222" y="5312" font-size="30.0" fill="#1fa65a">number(38,0)</text>
<text transform="scale(.1)" x="3548" y="5312" font-size="24.0" fill="#34383d">NULL</text>
<text transform="scale(.1)" x="3680" y="5312" font-size="25.0" fill="#1d2024">FK</text>
<text transform="scale(.1)" x="2893" y="5359" font-size="26.5" fill="#2f3338">WeightUnitMeasureCode</text>
<text transform="scale(.1)" x="3222" y="5359" font-size="30.0" fill="#e8832f">varchar(3)</text>
<text transform="scale(.1)" x="3548" y="5359" font-size="24.0" fill="#34383d">NULL</text>
<text transform="scale(.1)" x="2893" y="5405" font-size="26.5" fill="#2f3338">SizeUnitMeasureCode</text>
<text transform="scale(.1)" x="3222" y="5405" font-size="30.0" fill="#e8832f">varchar(3)</text>
<text transform="scale(.1)" x="3548" y="5405" font-size="24.0" fill="#34383d">NULL</text>
<text transform="scale(.1)" x="2893" y="5452" font-size="26.5" fill="#2f3338">EnglishProductName</text>
<text transform="scale(.1)" x="3222" y="5452" font-size="30.0" fill="#e8832f">varchar(50)</text>
<text transform="scale(.1)" x="2893" y="5498" font-size="26.5" fill="#2f3338">SpanishProductName</text>
<text transform="scale(.1)" x="3222" y="5498" font-size="30.0" fill="#e8832f">varchar(50)</text>
<text transform="scale(.1)" x="3548" y="5498" font-size="24.0" fill="#34383d">NULL</text>
<text transform="scale(.1)" x="2893" y="5544" font-size="26.5" fill="#2f3338">FrenchProductName</text>
<text transform="scale(.1)" x="3222" y="5544" font-size="30.0" fill="#e8832f">varchar(50)</text>
<text transform="scale(.1)" x="3548" y="5544" font-size="24.0" fill="#34383d">NULL</text>
<text transform="scale(.1)" x="2893" y="5591" font-size="26.5" fill="#2f3338">StandardCost</text>
<text transform="scale(.1)" x="3222" y="5591" font-size="30.0" fill="#1fa65a">number(38,4)</text>
<text transform="scale(.1)" x="3548" y="5591" font-size="24.0" fill="#34383d">NULL</text>
<text transform="scale(.1)" x="2893" y="5637" font-size="26.5" fill="#2f3338">FinishedGoodsFlag</text>
<text transform="scale(.1)" x="3222" y="5637" font-size="30.0" fill="#1fa65a">number(38,0)</text>
<text transform="scale(.1)" x="2893" y="5684" font-size="26.5" fill="#2f3338">Color</text>
<text transform="scale(.1)" x="3222" y="5684" font-size="30.0" fill="#e8832f">varchar(15)</text>
<text transform="scale(.1)" x="2893" y="5730" font-size="26.5" fill="#2f3338">SafetyStockLevel</text>
<text transform="scale(.1)" x="3222" y="5730" font-size="30.0" fill="#1fa65a">number(38,0)</text>
<text transform="scale(.1)" x="3548" y="5730" font-size="24.0" fill="#34383d">NULL</text>
<text transform="scale(.1)" x="2893" y="5776" font-size="26.5" fill="#2f3338">ReorderPoint</text>
<text transform="scale(.1)" x="3222" y="5776" font-size="30.0" fill="#1fa65a">number(38,0)</text>
<text transform="scale(.1)" x="3548" y="5776" font-size="24.0" fill="#34383d">NULL</text>
<text transform="scale(.1)" x="2893" y="5823" font-size="26.5" fill="#2f3338">ListPrice</text>
<text transform="scale(.1)" x="3222" y="5823" font-size="30.0" fill="#1fa65a">number(38,4)</text>
<text transform="scale(.1)" x="3548" y="5823" font-size="24.0" fill="#34383d">NULL</text>
<text transform="scale(.1)" x="2893" y="5869" font-size="26.5" fill="#2f3338">Size</text>
<text transform="scale(.1)" x="3222" y="5869" font-size="30.0" fill="#e8832f">varchar(50)</text>
<text transform="scale(.1)" x="3548" y="5869" font-size="24.0" fill="#34383d">NULL</text>
<text transform="scale(.1)" x="2893" y="5912" font-size="26.5" fill="#9a9fa6">...</text>
<rect x="348.50" y="622.40" width="94.70" height="43.50" fill="#b4b9bf" opacity=".42" filter="url(#sh)"/>
<rect x="348.00" y="621.50" width="94.70" height="43.50" fill="#f4f6fa" stroke="#9b9fa6" stroke-width="1.05"/>
<text transform="scale(.1)" x="3484" y="6200" font-size="28.5" fill="#70757b">tbl  DimProductCategory</text>
<text transform="scale(.1)" x="3500" y="6260" font-size="26.5" fill="#2f3338">ProductCategoryKey</text>
<text transform="scale(.1)" x="3918" y="6260" font-size="30.0" fill="#1fa65a">number(38,0)</text>
<text transform="scale(.1)" x="4108" y="6260" font-size="25.5" fill="#1fa65a">IDENTITY</text>
<text transform="scale(.1)" x="4328" y="6260" font-size="25.0" fill="#1d2024">PK</text>
<line x1="349.60" y1="628.55" x2="441.10" y2="628.55" stroke="#c3c8ce" stroke-width=".7"/>
<text transform="scale(.1)" x="3500" y="6331" font-size="26.5" fill="#2f3338">ProductCategoryAlternateKey</text>
<text transform="scale(.1)" x="3918" y="6331" font-size="30.0" fill="#1fa65a">number(38,0)</text>
<text transform="scale(.1)" x="4252" y="6331" font-size="24.0" fill="#34383d">NULL</text>
<text transform="scale(.1)" x="3500" y="6377" font-size="26.5" fill="#2f3338">EnglishProductCategoryName</text>
<text transform="scale(.1)" x="3918" y="6377" font-size="30.0" fill="#e8832f">varchar(50)</text>
<text transform="scale(.1)" x="3500" y="6424" font-size="26.5" fill="#2f3338">SpanishProductCategoryName</text>
<text transform="scale(.1)" x="3918" y="6424" font-size="30.0" fill="#e8832f">varchar(50)</text>
<rect x="471.10" y="503.30" width="66.40" height="80.00" fill="#b4b9bf" opacity=".42" filter="url(#sh)"/>
<rect x="470.60" y="502.40" width="66.40" height="80.00" fill="#f4f6fa" stroke="#9b9fa6" stroke-width="1.05"/>
<text transform="scale(.1)" x="4710" y="5009" font-size="28.5" fill="#70757b">tbl  FactInternetSales</text>
<rect x="471.80" y="504.00" width="64.00" height="2.60" fill="#eaecf0"/>
<line x1="472.20" y1="506.80" x2="535.40" y2="506.80" stroke="#cfd3d8" stroke-width=".6"/>
<text transform="scale(.1)" x="4725" y="5113" font-size="26.5" fill="#4a8fe2">ProductKey</text>
<text transform="scale(.1)" x="5040" y="5113" font-size="30.0" fill="#1fa65a">number(38,0)</text>
<text transform="scale(.1)" x="5290" y="5113" font-size="25.0" fill="#1d2024">FK</text>
<text transform="scale(.1)" x="4725" y="5159" font-size="26.5" fill="#4a8fe2">OrderDateKey</text>
<text transform="scale(.1)" x="5040" y="5159" font-size="30.0" fill="#1fa65a">number(38,0)</text>
<text transform="scale(.1)" x="5290" y="5159" font-size="25.0" fill="#1d2024">FK</text>
<text transform="scale(.1)" x="4725" y="5206" font-size="26.5" fill="#4a8fe2">DueDateKey</text>
<text transform="scale(.1)" x="5040" y="5206" font-size="30.0" fill="#1fa65a">number(38,0)</text>
<text transform="scale(.1)" x="5290" y="5206" font-size="25.0" fill="#1d2024">FK</text>
<text transform="scale(.1)" x="4725" y="5252" font-size="26.5" fill="#4a8fe2">ShipDateKey</text>
<text transform="scale(.1)" x="5040" y="5252" font-size="30.0" fill="#1fa65a">number(38,0)</text>
<text transform="scale(.1)" x="5290" y="5252" font-size="25.0" fill="#1d2024">FK</text>
<text transform="scale(.1)" x="4725" y="5299" font-size="26.5" fill="#4a8fe2">CustomerKey</text>
<text transform="scale(.1)" x="5040" y="5299" font-size="30.0" fill="#1fa65a">number(38,0)</text>
<text transform="scale(.1)" x="5290" y="5299" font-size="25.0" fill="#1d2024">FK</text>
<text transform="scale(.1)" x="4725" y="5345" font-size="26.5" fill="#4a8fe2">PromotionKey</text>
<text transform="scale(.1)" x="5040" y="5345" font-size="30.0" fill="#1fa65a">number(38,0)</text>
<text transform="scale(.1)" x="5290" y="5345" font-size="25.0" fill="#1d2024">FK</text>
<text transform="scale(.1)" x="4725" y="5391" font-size="26.5" fill="#4a8fe2">CurrencyKey</text>
<text transform="scale(.1)" x="5040" y="5391" font-size="30.0" fill="#1fa65a">number(38,0)</text>
<text transform="scale(.1)" x="5290" y="5391" font-size="25.0" fill="#1d2024">FK</text>
<text transform="scale(.1)" x="4725" y="5438" font-size="26.5" fill="#4a8fe2">SalesTerritoryKey</text>
<text transform="scale(.1)" x="5040" y="5438" font-size="30.0" fill="#1fa65a">number(38,0)</text>
<text transform="scale(.1)" x="5290" y="5438" font-size="25.0" fill="#1d2024">FK</text>
<text transform="scale(.1)" x="4725" y="5484" font-size="26.5" fill="#2f3338">SalesOrderNumber</text>
<text transform="scale(.1)" x="5040" y="5484" font-size="30.0" fill="#e8832f">varchar(20)</text>
<text transform="scale(.1)" x="4725" y="5531" font-size="26.5" fill="#2f3338">SalesOrderLineNumber</text>
<text transform="scale(.1)" x="5040" y="5531" font-size="30.0" fill="#1fa65a">number(38,0)</text>
<text transform="scale(.1)" x="4725" y="5577" font-size="26.5" fill="#2f3338">RevisionNumber</text>
<text transform="scale(.1)" x="5040" y="5577" font-size="30.0" fill="#1fa65a">number(38,0)</text>
<text transform="scale(.1)" x="4725" y="5623" font-size="26.5" fill="#2f3338">OrderQuantity</text>
<text transform="scale(.1)" x="5040" y="5623" font-size="30.0" fill="#1fa65a">number(38,0)</text>
<text transform="scale(.1)" x="4725" y="5670" font-size="26.5" fill="#2f3338">UnitPrice</text>
<text transform="scale(.1)" x="5040" y="5670" font-size="30.0" fill="#1fa65a">number(38,4)</text>
<text transform="scale(.1)" x="4725" y="5716" font-size="26.5" fill="#2f3338">ExtendedAmount</text>
<text transform="scale(.1)" x="5040" y="5716" font-size="30.0" fill="#1fa65a">number(38,4)</text>
<text transform="scale(.1)" x="4725" y="5763" font-size="26.5" fill="#2f3338">UnitPriceDiscountPct</text>
<text transform="scale(.1)" x="5040" y="5763" font-size="30.0" fill="#1fa65a">float</text>
<text transform="scale(.1)" x="4725" y="5805" font-size="26.5" fill="#9a9fa6">...</text>
<rect x="505.30" y="615.50" width="79.70" height="50.40" fill="#b4b9bf" opacity=".42" filter="url(#sh)"/>
<rect x="504.80" y="614.60" width="79.70" height="50.40" fill="#f4f6fa" stroke="#9b9fa6" stroke-width="1.05"/>
<text transform="scale(.1)" x="5052" y="6132" font-size="28.5" fill="#70757b">tbl  FactSurveyResponse</text>
<rect x="506.00" y="616.20" width="77.30" height="2.60" fill="#eaecf0"/>
<line x1="506.40" y1="619.00" x2="582.90" y2="619.00" stroke="#cfd3d8" stroke-width=".6"/>
<text transform="scale(.1)" x="5070" y="6239" font-size="26.5" fill="#2f3338">SurveyResponseKey</text>
<text transform="scale(.1)" x="5513" y="6239" font-size="30.0" fill="#1fa65a">number(38,0)</text>
<text transform="scale(.1)" x="5070" y="6285" font-size="26.5" fill="#4a8fe2">DateKey</text>
<text transform="scale(.1)" x="5513" y="6285" font-size="30.0" fill="#1fa65a">number(38,0)</text>
<text transform="scale(.1)" x="5770" y="6285" font-size="25.0" fill="#1d2024">FK</text>
<text transform="scale(.1)" x="5070" y="6332" font-size="26.5" fill="#2f3338">CustomerKey</text>
<text transform="scale(.1)" x="5513" y="6332" font-size="30.0" fill="#1fa65a">number(38,0)</text>
<text transform="scale(.1)" x="5070" y="6378" font-size="26.5" fill="#4a8fe2">ProductCategoryKey</text>
<text transform="scale(.1)" x="5513" y="6378" font-size="30.0" fill="#1fa65a">number(38,0)</text>
<text transform="scale(.1)" x="5770" y="6378" font-size="25.0" fill="#1d2024">FK</text>
<text transform="scale(.1)" x="5070" y="6425" font-size="26.5" fill="#2f3338">EnglishProductCategoryName</text>
<text transform="scale(.1)" x="5513" y="6425" font-size="30.0" fill="#e8832f">varchar(50)</text>
<rect x="720.10" y="556.30" width="78.50" height="19.10" fill="#b4b9bf" opacity=".42" filter="url(#sh)"/>
<rect x="719.60" y="555.40" width="78.50" height="19.10" fill="#f4f6fa" stroke="#9b9fa6" stroke-width="1.05"/>
<text transform="scale(.1)" x="7200" y="5539" font-size="28.5" fill="#70757b">tbl  DimCurrency</text>
<text transform="scale(.1)" x="7219" y="5599" font-size="26.5" fill="#2f3338">CurrencyKey</text>
<text transform="scale(.1)" x="7532" y="5599" font-size="30.0" fill="#1fa65a">number(38,0)</text>
<text transform="scale(.1)" x="7723" y="5599" font-size="25.5" fill="#1fa65a">IDENTITY</text>
<text transform="scale(.1)" x="7885" y="5599" font-size="25.0" fill="#1d2024">PK</text>
<line x1="721.20" y1="562.45" x2="796.50" y2="562.45" stroke="#c3c8ce" stroke-width=".7"/>
<text transform="scale(.1)" x="7219" y="5675" font-size="26.5" fill="#2f3338">CurrencyAlternateKey</text>
<text transform="scale(.1)" x="7532" y="5675" font-size="30.0" fill="#e8832f">varchar(3)</text>
<text transform="scale(.1)" x="7219" y="5721" font-size="26.5" fill="#2f3338">CurrencyName</text>
<text transform="scale(.1)" x="7532" y="5721" font-size="30.0" fill="#e8832f">varchar(50)</text>
<rect x="677.10" y="616.40" width="53.40" height="49.50" fill="#b4b9bf" opacity=".42" filter="url(#sh)"/>
<rect x="676.60" y="615.50" width="53.40" height="49.50" fill="#f4f6fa" stroke="#9b9fa6" stroke-width="1.05"/>
<text transform="scale(.1)" x="6770" y="6140" font-size="28.5" fill="#70757b">tbl  DimCustomer</text>
<text transform="scale(.1)" x="6790" y="6200" font-size="26.5" fill="#2f3338">CustomerKey</text>
<text transform="scale(.1)" x="7150" y="6200" font-size="30.0" fill="#1fa65a">number(38,0)</text>
<line x1="678.20" y1="622.55" x2="728.40" y2="622.55" stroke="#c3c8ce" stroke-width=".7"/>
<text transform="scale(.1)" x="6790" y="6274" font-size="26.5" fill="#4a8fe2">GeographyKey</text>
<text transform="scale(.1)" x="7150" y="6274" font-size="30.0" fill="#1fa65a">number(38,0)</text>
<text transform="scale(.1)" x="6790" y="6320" font-size="26.5" fill="#2f3338">CustomerAlternateKey</text>
<text transform="scale(.1)" x="7150" y="6320" font-size="30.0" fill="#e8832f">varchar(15)</text>
<text transform="scale(.1)" x="6790" y="6367" font-size="26.5" fill="#2f3338">Title</text>
<text transform="scale(.1)" x="7150" y="6367" font-size="30.0" fill="#e8832f">varchar(8)</text>
<text transform="scale(.1)" x="6790" y="6413" font-size="26.5" fill="#2f3338">FirstName</text>
<text transform="scale(.1)" x="7150" y="6413" font-size="30.0" fill="#e8832f">varchar(50)</text>
<rect x="707.80" y="599.30" width="90.40" height="66.60" fill="#b4b9bf" opacity=".42" filter="url(#sh)"/>
<rect x="707.30" y="598.40" width="90.40" height="66.60" fill="#f4f6fa" stroke="#9b9fa6" stroke-width="1.05"/>
<text transform="scale(.1)" x="7077" y="5969" font-size="28.5" fill="#70757b">tbl  DimPromotion</text>
<text transform="scale(.1)" x="7092" y="6029" font-size="26.5" fill="#2f3338">PromotionKey</text>
<text transform="scale(.1)" x="7465" y="6029" font-size="30.0" fill="#1fa65a">number(38,0)</text>
<text transform="scale(.1)" x="7655" y="6029" font-size="25.5" fill="#1fa65a">IDENTITY</text>
<text transform="scale(.1)" x="7880" y="6029" font-size="25.0" fill="#1d2024">PK</text>
<line x1="708.90" y1="605.45" x2="796.10" y2="605.45" stroke="#c3c8ce" stroke-width=".7"/>
<text transform="scale(.1)" x="7092" y="6100" font-size="26.5" fill="#2f3338">PromotionAlternateKey</text>
<text transform="scale(.1)" x="7465" y="6100" font-size="30.0" fill="#1fa65a">number(38,0)</text>
<text transform="scale(.1)" x="7791" y="6100" font-size="24.0" fill="#34383d">NULL</text>
<text transform="scale(.1)" x="7092" y="6146" font-size="26.5" fill="#2f3338">EnglishPromotionName</text>
<text transform="scale(.1)" x="7465" y="6146" font-size="30.0" fill="#e8832f">varchar(255)</text>
<text transform="scale(.1)" x="7791" y="6146" font-size="24.0" fill="#34383d">NULL</text>
<text transform="scale(.1)" x="7092" y="6193" font-size="26.5" fill="#2f3338">SpanishPromotionName</text>
<text transform="scale(.1)" x="7465" y="6193" font-size="30.0" fill="#e8832f">varchar(255)</text>
<text transform="scale(.1)" x="7791" y="6193" font-size="24.0" fill="#34383d">NULL</text>
<text transform="scale(.1)" x="7092" y="6239" font-size="26.5" fill="#2f3338">FrenchPromotionName</text>
<text transform="scale(.1)" x="7465" y="6239" font-size="30.0" fill="#e8832f">varchar(255)</text>
<text transform="scale(.1)" x="7791" y="6239" font-size="24.0" fill="#34383d">NULL</text>
<text transform="scale(.1)" x="7092" y="6286" font-size="26.5" fill="#2f3338">DiscountPct</text>
<text transform="scale(.1)" x="7465" y="6286" font-size="30.0" fill="#1fa65a">float</text>
<text transform="scale(.1)" x="7791" y="6286" font-size="24.0" fill="#34383d">NULL</text>
<text transform="scale(.1)" x="7092" y="6332" font-size="26.5" fill="#2f3338">EnglishPromotionType</text>
<text transform="scale(.1)" x="7465" y="6332" font-size="30.0" fill="#e8832f">varchar(50)</text>
<text transform="scale(.1)" x="7791" y="6332" font-size="24.0" fill="#34383d">NULL</text>
<text transform="scale(.1)" x="7092" y="6378" font-size="26.5" fill="#2f3338">SpanishPromotionType</text>
<text transform="scale(.1)" x="7465" y="6378" font-size="30.0" fill="#e8832f">varchar(50)</text>
<text transform="scale(.1)" x="7791" y="6378" font-size="24.0" fill="#34383d">NULL</text>
<text transform="scale(.1)" x="7092" y="6425" font-size="26.5" fill="#2f3338">FrenchPromotionType</text>
<text transform="scale(.1)" x="7465" y="6425" font-size="30.0" fill="#e8832f">varchar(50)</text>
<text transform="scale(.1)" x="7791" y="6425" font-size="24.0" fill="#34383d">NULL</text>
<g fill="#2a2d31">
<rect x="498.60" y="225.00" width="1.6" height="1.6"/>
<rect x="498.60" y="239.30" width="1.6" height="1.6"/>
<rect x="530.80" y="210.20" width="1.6" height="1.6"/>
<rect x="520.30" y="254.20" width="1.6" height="1.6"/>
<rect x="541.30" y="254.20" width="1.6" height="1.6"/>
<rect x="584.20" y="234.50" width="1.6" height="1.6"/>
<rect x="604.20" y="234.50" width="1.6" height="1.6"/>
<rect x="590.90" y="356.80" width="1.6" height="1.6"/>
<rect x="772.80" y="430.50" width="1.6" height="1.6"/>
<rect x="681.40" y="456.20" width="1.6" height="1.6"/>
<rect x="663.40" y="456.20" width="1.6" height="1.6"/>
<rect x="645.10" y="456.20" width="1.6" height="1.6"/>
<rect x="500.50" y="435.60" width="1.6" height="1.6"/>
<rect x="626.40" y="485.00" width="1.6" height="1.6"/>
<rect x="626.40" y="512.70" width="1.6" height="1.6"/>
<rect x="496.50" y="498.20" width="1.6" height="1.6"/>
<rect x="509.70" y="498.20" width="1.6" height="1.6"/>
<rect x="523.20" y="498.20" width="1.6" height="1.6"/>
<rect x="483.00" y="498.20" width="1.6" height="1.6"/>
<rect x="604.70" y="524.20" width="1.6" height="1.6"/>
<rect x="330.30" y="510.70" width="1.6" height="1.6"/>
<rect x="212.70" y="463.80" width="1.6" height="1.6"/>
<rect x="246.90" y="463.80" width="1.6" height="1.6"/>
<rect x="394.10" y="617.00" width="1.6" height="1.6"/>
<rect x="469.20" y="540.50" width="1.6" height="1.6"/>
<rect x="536.80" y="519.70" width="1.6" height="1.6"/>
<rect x="536.80" y="540.50" width="1.6" height="1.6"/>
<rect x="536.80" y="561.20" width="1.6" height="1.6"/>
<rect x="543.70" y="610.50" width="1.6" height="1.6"/>
<rect x="663.30" y="541.40" width="1.6" height="1.6"/>
<rect x="700.20" y="477.80" width="1.6" height="1.6"/>
<rect x="700.20" y="499.00" width="1.6" height="1.6"/>
<rect x="700.20" y="519.80" width="1.6" height="1.6"/>
<rect x="771.20" y="551.00" width="1.6" height="1.6"/>
<rect x="919.50" y="464.10" width="1.6" height="1.6"/>
<rect x="863.10" y="505.50" width="1.6" height="1.6"/>
<rect x="626.40" y="512.70" width="1.6" height="1.6"/>
<rect x="503.50" y="632.60" width="1.6" height="1.6"/>
</g>
</svg>
</body>
</html>
